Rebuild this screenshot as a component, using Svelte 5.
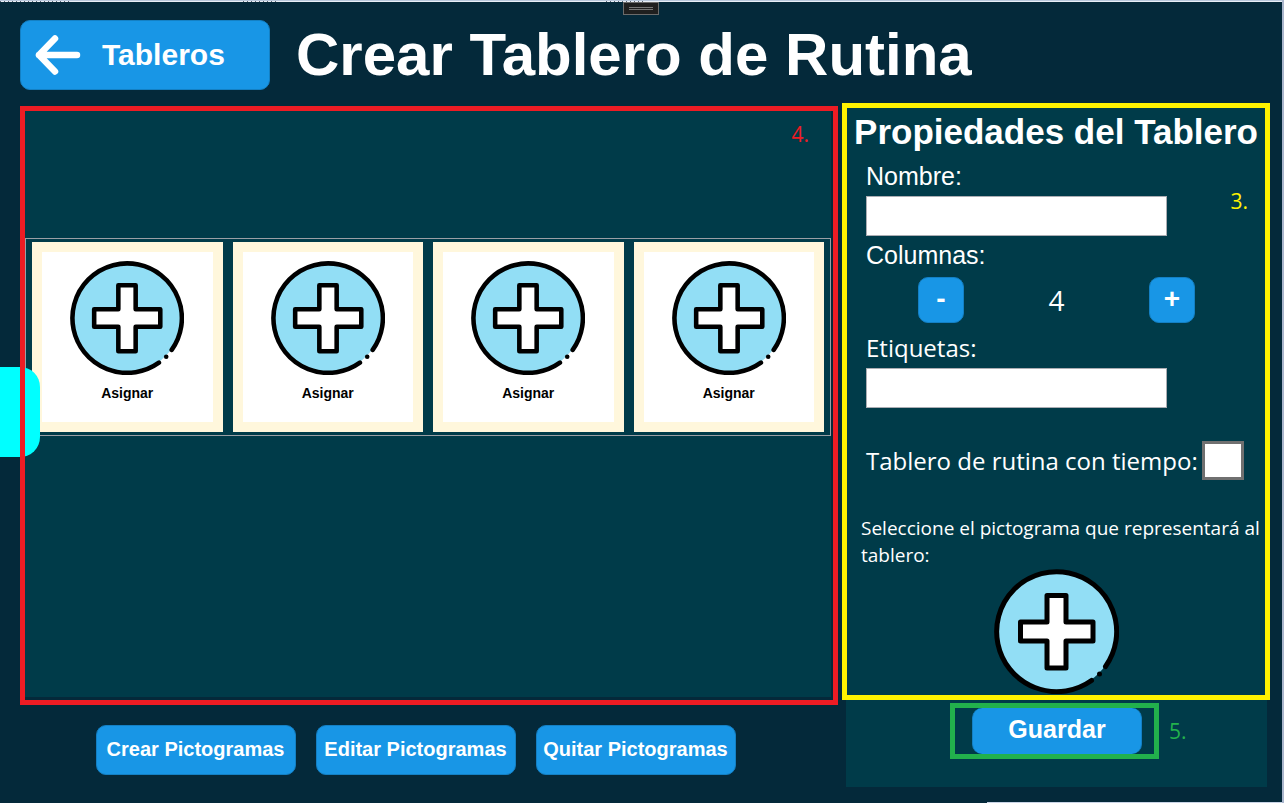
<script>
  let columns = $state(4);
  let name = $state('');
  let tags = $state('');
  let timed = $state(false);
  const actions = ['Crear Pictogramas', 'Editar Pictogramas', 'Quitar Pictogramas'];
</script>

{#snippet plusIcon()}
  <svg class="plus" viewBox="0 0 125 125" aria-hidden="true">
    <circle cx="62.5" cy="62.5" r="59.5" fill="#92def5" />
    <g fill="none" stroke="#000" stroke-width="5" stroke-linecap="round" stroke-linejoin="round">
      <path d="M111.5 97.5A60 60 0 1 0 97.5 111.5" />
      <path
        fill="#fff"
        d="M53 26.500h19v26.500h27v19h-27v27h-19v-27h-26.500v-19h26.500z"
      />
    </g>
    <circle cx="105.500" cy="105" r="2.500" />
  </svg>
{/snippet}

<div class="app">
  <div class="strip"></div>
  <div class="handle"><span></span><span></span></div>

  <header>
    <button class="btn back">
      <svg viewBox="0 0 46 40" aria-hidden="true">
        <path d="M42 20H4M20 3.500L4 20l16 16.500" fill="none" stroke="#fff" stroke-width="6.500" stroke-linecap="round" stroke-linejoin="round" />
      </svg>
      <span>Tableros</span>
    </button>
    <h1>Crear Tablero de Rutina</h1>
  </header>

  <main>
    <section class="left">
      <div class="board">
        <div class="surface">
          <div class="cards" style:grid-template-columns={`repeat(${columns}, 1fr)`}>
            {#each Array(columns) as _}
              <button class="card">
                {@render plusIcon()}
                <span>Asignar</span>
              </button>
            {/each}
          </div>
        </div>
        <button class="tab" aria-label="Menú"></button>
        <span class="mark four">4.</span>
      </div>
      <div class="actions">
        {#each actions as action}
          <button class="btn action">{action}</button>
        {/each}
      </div>
    </section>

    <aside>
      <div class="props">
        <h2>Propiedades del Tablero</h2>
        <div class="fields">
          <label class="arial" for="name">Nombre:</label>
          <input id="name" class="text" type="text" bind:value={name} />
          <span class="caption arial">Columnas:</span>
          <div class="stepper">
            <button class="btn step" onclick={() => (columns = Math.max(1, columns - 1))}>-</button>
            <output>{columns}</output>
            <button class="btn step" onclick={() => (columns += 1)}>+</button>
          </div>
          <label class="tags" for="tags">Etiquetas:</label>
          <input id="tags" class="text" type="text" bind:value={tags} />
          <div class="timed">
            <label for="timed">Tablero de rutina con tiempo:</label>
            <input id="timed" type="checkbox" bind:checked={timed} />
          </div>
        </div>
        <p>Seleccione el pictograma que representará al tablero:</p>
        <button class="picker" aria-label="Pictograma">{@render plusIcon()}</button>
        <span class="mark three">3.</span>
      </div>
      <footer>
        <div class="save">
          <button class="btn">Guardar</button>
          <span class="mark five">5.</span>
        </div>
      </footer>
    </aside>
  </main>
  <div class="edge"></div>
</div>

<style>
  :global(body) {
    margin: 0;
  }
  * {
    box-sizing: border-box;
  }
  .app {
    position: relative;
    display: flex;
    flex-direction: column;
    min-height: 100vh;
    padding-bottom: 16px;
    background: #04293a;
    border-right: 2px solid #aab6cc;
    color: #fff;
    font-family: 'Liberation Sans', Arial, sans-serif;
  }
  button {
    padding: 0;
    border: 0;
    font-family: inherit;
    cursor: pointer;
  }
  h1,
  h2,
  p {
    margin: 0;
  }
  .strip {
    height: 2px;
    background:
      repeating-linear-gradient(90deg, #5b6473 0 1px, transparent 1px 4px) 0 1px / 70px 1px no-repeat,
      repeating-linear-gradient(90deg, #5b6473 0 1px, transparent 1px 4px) 243px 1px / 36px 1px no-repeat,
      repeating-linear-gradient(90deg, #5b6473 0 1px, transparent 1px 4px) 606px 1px / 38px 1px no-repeat,
      linear-gradient(#b9c8dc 50%, #e9eff7 50%);
  }
  .edge {
    position: absolute;
    right: 0;
    bottom: 0;
    width: 23%;
    height: 1px;
    background: #c9d4e6;
  }
  .handle {
    position: absolute;
    top: 2px;
    left: 50%;
    display: flex;
    flex-direction: column;
    justify-content: center;
    gap: 1px;
    width: 36px;
    height: 13px;
    margin-left: -18px;
    padding: 0 5px;
    background: #1f1f1f;
    border: 1px solid #6b6b6b;
  }
  .handle span {
    height: 1px;
    background: #777;
  }
  .btn {
    background: #1896e6;
    border: 1px solid #1480c4;
    border-radius: 10px;
    color: #fff;
    font-weight: 700;
  }
  header {
    display: flex;
    align-items: center;
    gap: 26px;
    padding: 18px 12px 13px 20px;
  }
  .back {
    display: flex;
    align-items: center;
    gap: 21px;
    width: 250px;
    height: 70px;
    padding-left: 14px;
    font-size: 30px;
  }
  .back svg {
    width: 46px;
    height: 40px;
  }
  h1 {
    font-size: 60px;
    line-height: 70px;
    white-space: nowrap;
  }
  main {
    flex: 1;
    display: grid;
    grid-template-columns: 818fr 428fr;
    gap: 4px;
    padding: 0 12px 0 20px;
  }
  .left {
    display: flex;
    flex-direction: column;
    padding-top: 3px;
  }
  .board {
    position: relative;
    flex: 1;
    display: flex;
    padding: 5px 7px 8px 5px;
  }
  .board::after {
    content: '';
    position: absolute;
    inset: 0;
    border: 5px solid #ed1c24;
    pointer-events: none;
  }
  .surface {
    flex: 1;
    padding-top: 127px;
    background: #003b49;
  }
  .cards {
    display: grid;
    gap: 10px;
    padding: 3px 6px;
    border: 1px solid #9a9fa5;
  }
  .card {
    display: flex;
    flex-direction: column;
    align-items: center;
    gap: 10px;
    height: 190px;
    padding-top: 9px;
    background: #fff;
    border: 10px solid #fff7dc;
    color: #000;
    font-size: 14px;
    line-height: 16px;
    font-weight: 700;
  }
  .plus {
    display: block;
    width: 114px;
    height: 114px;
  }
  .tab {
    position: absolute;
    top: 261px;
    left: -20px;
    width: 40px;
    height: 90px;
    background: #0ff;
    border-radius: 0 20px 20px 0;
  }
  .mark {
    position: absolute;
    font-family: 'Open Sans', 'Noto Sans', sans-serif;
    font-size: 21px;
    line-height: 28px;
  }
  .four {
    top: 14px;
    right: 29px;
    color: #ed1c24;
  }
  .three {
    top: 79px;
    right: 17px;
    color: #fff200;
  }
  .five {
    top: 9px;
    left: 214px;
    color: #22b14c;
  }
  .actions {
    display: flex;
    justify-content: center;
    gap: 20px;
    padding: 20px 27px 12px 0;
  }
  .action {
    width: 200px;
    height: 50px;
    padding-bottom: 2px;
    font-size: 20px;
  }
  aside {
    display: flex;
    flex-direction: column;
  }
  .props {
    position: relative;
    flex: 1;
    display: flex;
    flex-direction: column;
    background: #003b49;
    border: 5px solid #fff200;
    font-family: 'Open Sans', 'Noto Sans', sans-serif;
  }
  h2 {
    font-family: 'Liberation Sans', Arial, sans-serif;
    font-size: 35px;
    line-height: 48px;
    text-align: center;
    white-space: nowrap;
  }
  .fields {
    display: flex;
    flex-direction: column;
    padding: 5px 19px 0;
    font-size: 24px;
  }
  .arial {
    font-family: 'Liberation Sans', Arial, sans-serif;
    font-size: 25px;
    line-height: 30px;
  }
  .text {
    width: 301px;
    height: 40px;
    margin: 5px 0 4px;
    padding: 0 8px;
    background: #fff;
    border: 1px solid #abadb3;
    font-size: 24px;
  }
  .stepper {
    display: flex;
    align-items: center;
    justify-content: space-between;
    width: 277px;
    margin: 7px 0 9px 52px;
    font-size: 28px;
  }
  .step {
    width: 46px;
    height: 46px;
    padding-bottom: 2px;
    font-family: 'Liberation Sans', Arial, sans-serif;
    font-size: 28px;
  }
  .tags {
    line-height: 31px;
  }
  .timed {
    display: flex;
    align-items: center;
    gap: 4px;
    margin-top: 29px;
    white-space: nowrap;
  }
  .timed input {
    appearance: none;
    flex: none;
    width: 42px;
    height: 39px;
    margin: 0;
    background: #fff;
    border: 3px solid #707070;
  }
  .timed input:checked {
    background: #1896e6;
  }
  p {
    padding: 35px 0 0 14px;
    font-size: 19px;
    line-height: 27px;
  }
  .picker {
    align-self: center;
    background: none;
  }
  .picker .plus {
    width: 125px;
    height: 125px;
  }
  footer {
    display: flex;
    justify-content: center;
    margin: 0 3px 0 4px;
    padding: 3px 4px 28px 0;
    background: #003b49;
  }
  .save {
    position: relative;
    display: flex;
    justify-content: center;
    width: 209px;
    padding-left: 5px;
    border: 5px solid #22b14c;
  }
  .save .btn {
    width: 170px;
    height: 46px;
    padding-bottom: 3px;
    border-width: 0 1px;
    font-size: 25px;
  }
</style>
